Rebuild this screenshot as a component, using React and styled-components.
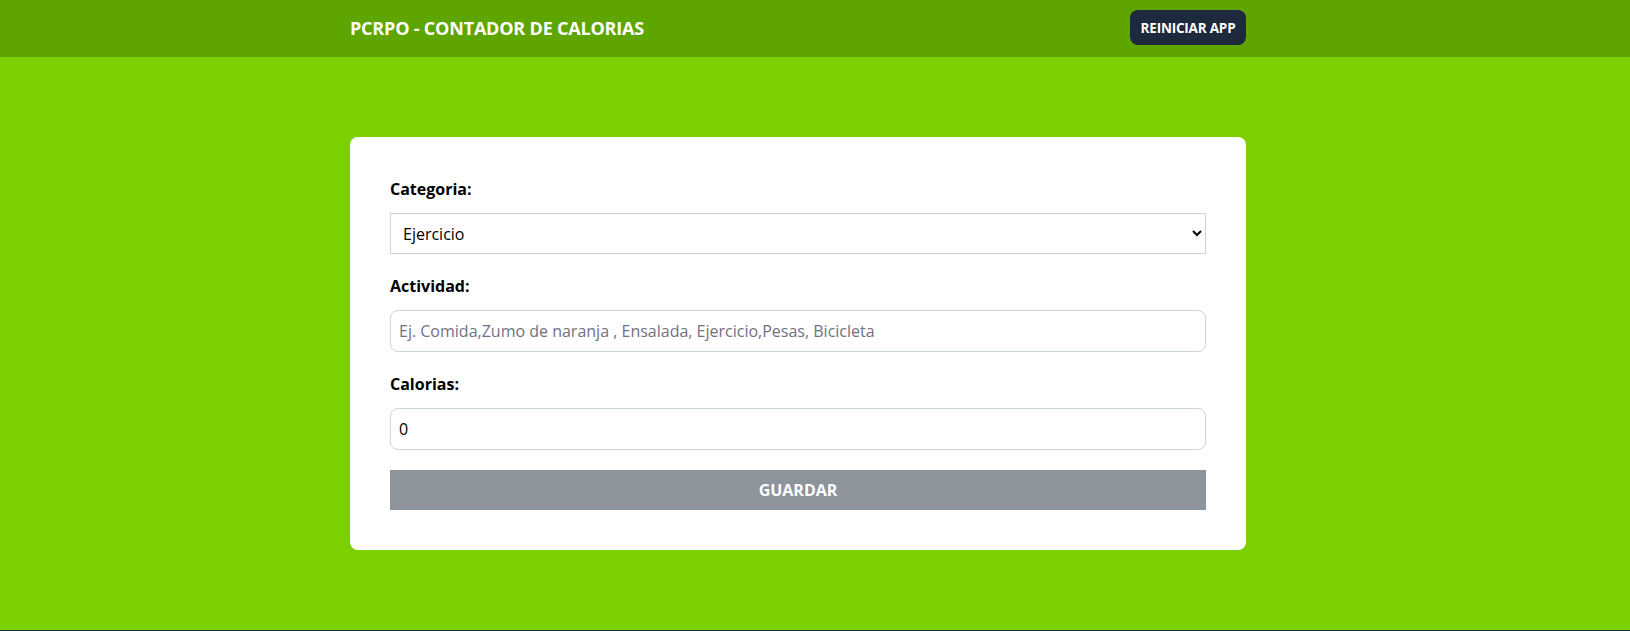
import React, { useState } from 'react';
import styled, { createGlobalStyle } from 'styled-components';

const GlobalStyle = createGlobalStyle`
    * {
        box-sizing: border-box;
    }
    body {
        margin: 0;
        background: #1d293d;
        font-family: 'Open Sans', 'Noto Sans', sans-serif;
    }
`;

const categorias = [
    { id: 1, name: 'Comida' },
    { id: 2, name: 'Ejercicio' },
];

const App = () => {
    const [categoria, setCategoria] = useState(2);
    const [actividad, setActividad] = useState('');
    const [calorias, setCalorias] = useState(0);

    return (
        <>
            <GlobalStyle />
            <Header>
                <Container>
                    <HeaderRow>
                        <Title>PCRPO - Contador de Calorias</Title>
                        <ResetButton type="button">Reiniciar App</ResetButton>
                    </HeaderRow>
                </Container>
            </Header>
            <FormSection>
                <Container>
                    <Card>
                        <Field>
                            <Label htmlFor="category">Categoria:</Label>
                            <Select
                                id="category"
                                value={categoria}
                                onChange={(e) => setCategoria(+e.target.value)}
                            >
                                {categorias.map(({ id, name }) => (
                                    <option key={id} value={id}>
                                        {name}
                                    </option>
                                ))}
                            </Select>
                        </Field>
                        <Field>
                            <Label htmlFor="name">Actividad:</Label>
                            <Input
                                id="name"
                                type="text"
                                placeholder="Ej. Comida,Zumo de naranja , Ensalada, Ejercicio,Pesas, Bicicleta"
                                value={actividad}
                                onChange={(e) => setActividad(e.target.value)}
                            />
                        </Field>
                        <Field>
                            <Label htmlFor="calories">Calorias:</Label>
                            <Input
                                id="calories"
                                type="number"
                                value={calorias}
                                onChange={(e) => setCalorias(+e.target.value)}
                            />
                        </Field>
                        <SubmitButton type="submit" value="Guardar" disabled />
                    </Card>
                </Container>
            </FormSection>
            <ListSection />
        </>
    );
};

export default App;

const Header = styled.header`
    background: #5ea500;
    height: 57px;
    display: flex;
    align-items: center;
    padding-right: 34px;
`;

const Container = styled.div`
    max-width: 896px;
    width: 100%;
    margin: 0 auto;
`;

const HeaderRow = styled.div`
    display: flex;
    justify-content: space-between;
    align-items: center;
    margin-top: -2px;
`;

const Title = styled.h1`
    margin: 0;
    color: #fff;
    font-size: 18px;
    line-height: 28px;
    font-weight: 700;
    letter-spacing: -0.2px;
    text-transform: uppercase;
`;

const ResetButton = styled.button`
    background: #1d293d;
    color: #fff;
    border: none;
    border-radius: 8px;
    padding: 0;
    width: 116px;
    height: 35px;
    white-space: nowrap;
    font-family: inherit;
    font-size: 13.5px;
    font-weight: 700;
    letter-spacing: -0.2px;
    text-transform: uppercase;
    cursor: pointer;
`;

const FormSection = styled.section`
    background: #7ccf00;
    padding: 80px 34px 80px 0;
`;

const Card = styled.form`
    background: #fff;
    border-radius: 8px;
    padding: 40px;
    display: flex;
    flex-direction: column;
    gap: 20px;
`;

const Field = styled.div`
    display: flex;
    flex-direction: column;
    gap: 12px;
`;

const Label = styled.label`
    font-weight: 700;
    font-size: 16px;
    line-height: 24px;
    color: #000;
`;

const Select = styled.select`
    height: 41px;
    border: 1px solid #cad5e2;
    background: #fff;
    padding: 0 8px;
    font-family: inherit;
    font-size: 16px;
    color: #000;
`;

const Input = styled.input`
    border: 1px solid #cad5e2;
    border-radius: 8px;
    padding: 8px;
    font-family: inherit;
    font-size: 16px;
    line-height: 24px;
    color: #000;
    &::placeholder {
        color: #717182;
    }
`;

const SubmitButton = styled.input`
    height: 40px;
    border: none;
    background: #8e949b;
    color: #fff;
    font-family: inherit;
    font-size: 16px;
    font-weight: 700;
    text-transform: uppercase;
`;

const ListSection = styled.section`
    background: #1d293d;
    height: 200px;
`;
